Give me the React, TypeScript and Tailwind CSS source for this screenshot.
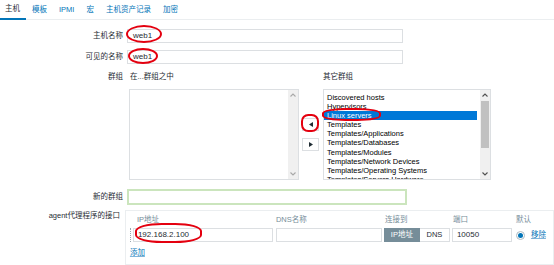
import React from "react"

const tabs = ["主机", "模板", "IPMI", "宏", "主机资产记录", "加密"]

const otherGroups = [
  "Discovered hosts",
  "Hypervisors",
  "Linux servers",
  "Templates",
  "Templates/Applications",
  "Templates/Databases",
  "Templates/Modules",
  "Templates/Network Devices",
  "Templates/Operating Systems",
  "Templates/Servers Hardware",
]

function Chevron({ up, color }: { up?: boolean; color: string }) {
  return (
    <svg width="6" height="4" viewBox="0 0 6 4">
      <path
        d={up ? "M0.5 3.5 L3 1 L5.5 3.5" : "M0.5 0.5 L3 3 L5.5 0.5"}
        fill="none"
        stroke={color}
        strokeWidth="1.1"
      />
    </svg>
  )
}

function Scrollbar({ enabled }: { enabled?: boolean }) {
  const color = enabled ? "#505050" : "#a8a8a8"
  return (
    <div className="flex flex-col w-[10px] h-full bg-[#f0f0f0]">
      <div className="h-[10px] flex items-center justify-center">
        <Chevron up color={color} />
      </div>
      <div className="flex-1 px-[1px]">
        {enabled && <div className="mt-[1px] h-[47px] bg-[#c1c1c1]" />}
      </div>
      <div className="h-[10px] flex items-center justify-center">
        <Chevron color={color} />
      </div>
    </div>
  )
}

function Arrow({ left }: { left?: boolean }) {
  return (
    <div className="w-[17px] h-[13px] border border-[#dcdfe2] bg-white flex items-center justify-center">
      <svg width="4" height="5" viewBox="0 0 4 5">
        <path d={left ? "M4 0 L0 2.5 L4 5 Z" : "M0 0 L4 2.5 L0 5 Z"} fill="#1f2c33" />
      </svg>
    </div>
  )
}

export default function App() {
  return (
    <div className="relative w-[554px] h-[265px] overflow-hidden bg-white text-[#1f2c33] text-[7.5px] leading-none font-['Liberation_Sans','Noto_Sans_CJK_SC',sans-serif]">
      {/* Tabs */}
      <div className="flex h-[20px] border-b border-[#ebeef0]">
        {tabs.map((t, i) => (
          <div
            key={t}
            className={
              i === 0
                ? "flex items-center pl-[5px] pr-[6px] border-b-2 border-[#0275b8] -mb-px text-[#1f2c33]"
                : "flex items-center px-[6px] text-[#0275b8]"
            }
          >
            {t}
          </div>
        ))}
      </div>

      <div className="pt-[9px]">
        {/* Host name */}
        <div className="flex items-center h-[14px]">
          <div className="w-[123px] text-right">主机名称</div>
          <div className="ml-[4px] w-[276px] h-[14px] border border-[#dcdfe2] flex items-center pl-[5px] text-[8px]">
            web1
          </div>
        </div>

        {/* Visible name */}
        <div className="flex items-center h-[14px] mt-[7px]">
          <div className="w-[123px] text-right">可见的名称</div>
          <div className="ml-[4px] w-[276px] h-[14px] border border-[#dcdfe2] flex items-center pl-[5px] text-[8px]">
            web1
          </div>
        </div>

        {/* Groups */}
        <div className="flex mt-[8px]">
          <div className="w-[123px] text-right h-[10px] leading-[10px]">群组</div>
          <div className="ml-[6px] grid grid-cols-[170px_17px_169px] gap-x-[3px]">
            <div className="h-[10px] leading-[10px] pl-[1px]">在...群组之中</div>
            <div />
            <div className="h-[10px] leading-[10px] pl-[1px]">其它群组</div>

            <div className="mt-[7px] h-[91px] border border-[#dcdfe2] flex justify-end">
              <Scrollbar />
            </div>
            <div className="mt-[7px] flex flex-col pt-[29px] gap-[7px]">
              <Arrow left />
              <Arrow />
            </div>
            <div className="mt-[7px] ml-[1px] h-[91px] border border-[#dcdfe2] flex">
              <div className="flex-1 overflow-hidden pt-[3px] pr-[3px] text-black">
                {otherGroups.map((g, i) => (
                  <div
                    key={g}
                    className={
                      "h-[9.1px] leading-[9.1px] pl-[3px] whitespace-nowrap " +
                      (i === 2 ? "bg-[#0078d7] text-white" : "")
                    }
                  >
                    {g}
                  </div>
                ))}
              </div>
              <Scrollbar enabled />
            </div>
          </div>
        </div>

        {/* New group */}
        <div className="flex items-center mt-[9px] h-[16px]">
          <div className="w-[123px] text-right">新的群组</div>
          <div className="ml-[4px] w-[280px] h-[16px] border-2 border-[#cbe5bd]" />
        </div>

        {/* Agent interfaces */}
        <div className="flex mt-[5px]">
          <div className="w-[123px] text-right pt-[2px]">agent代理程序的接口</div>
          <div className="ml-[5px] w-[440px] border border-[#ebeef0] pl-[4px] pt-[4px] pb-[6px]">
            <div className="flex h-[10px] leading-[10px] text-[#768d99]">
              <div className="w-[146px] pl-[7px]">IP地址</div>
              <div className="w-[108px]">DNS名称</div>
              <div className="w-[68px] pl-[1px]">连接到</div>
              <div className="w-[64px] pl-[1px]">端口</div>
              <div>默认</div>
            </div>
            <div className="flex mt-[3px] h-[14px] items-center">
              <div className="w-[3px] h-[14px] border-l border-dotted border-[#9aa7ae]" />
              <div className="w-[140px] h-[14px] border border-[#dcdfe2] flex items-center pl-[4px] text-[8px]">
                192.168.2.100
              </div>
              <div className="ml-[3px] w-[106px] h-[14px] border border-[#dcdfe2]" />
              <div className="ml-[2px] flex h-[14px]">
                <div className="w-[36px] bg-[#768d99] text-white flex items-center justify-center border border-[#768d99]">
                  IP地址
                </div>
                <div className="w-[30px] border border-l-0 border-[#dcdfe2] flex items-center justify-center">
                  DNS
                </div>
              </div>
              <div className="ml-[2px] w-[60px] h-[14px] border border-[#dcdfe2] flex items-center pl-[4px] text-[8px]">
                10050
              </div>
              <div className="ml-[4px] w-[9px] h-[9px] rounded-full border border-[#acbbc3] flex items-center justify-center">
                <div className="w-[5px] h-[5px] rounded-full bg-[#0275b8]" />
              </div>
              <div className="ml-[6px] text-[#0275b8] underline decoration-[#7fb4d9]">移除</div>
            </div>
            <div className="mt-[6px] h-[10px] leading-[10px] text-[#0275b8] underline decoration-[#7fb4d9]">
              添加
            </div>
          </div>
        </div>
      </div>

      {/* Red annotation marks */}
      <div className="absolute left-[126px] top-[25px] w-[36px] h-[18px] rounded-[50%] border-2 border-[#e4000f]" />
      <div className="absolute left-[128px] top-[48px] w-[30px] h-[16px] rounded-[50%] border-2 border-[#e4000f]" />
      <div className="absolute left-[301px] top-[114px] w-[18px] h-[18px] rounded-[40%] border-2 border-[#e4000f]" />
      <div className="absolute left-[322px] top-[108px] w-[59px] h-[13px] rounded-[40%] border-2 border-[#e4000f]" />
      <div className="absolute left-[135px] top-[223px] w-[67px] h-[20px] rounded-[40%] border-2 border-[#e4000f]" />
    </div>
  )
}
